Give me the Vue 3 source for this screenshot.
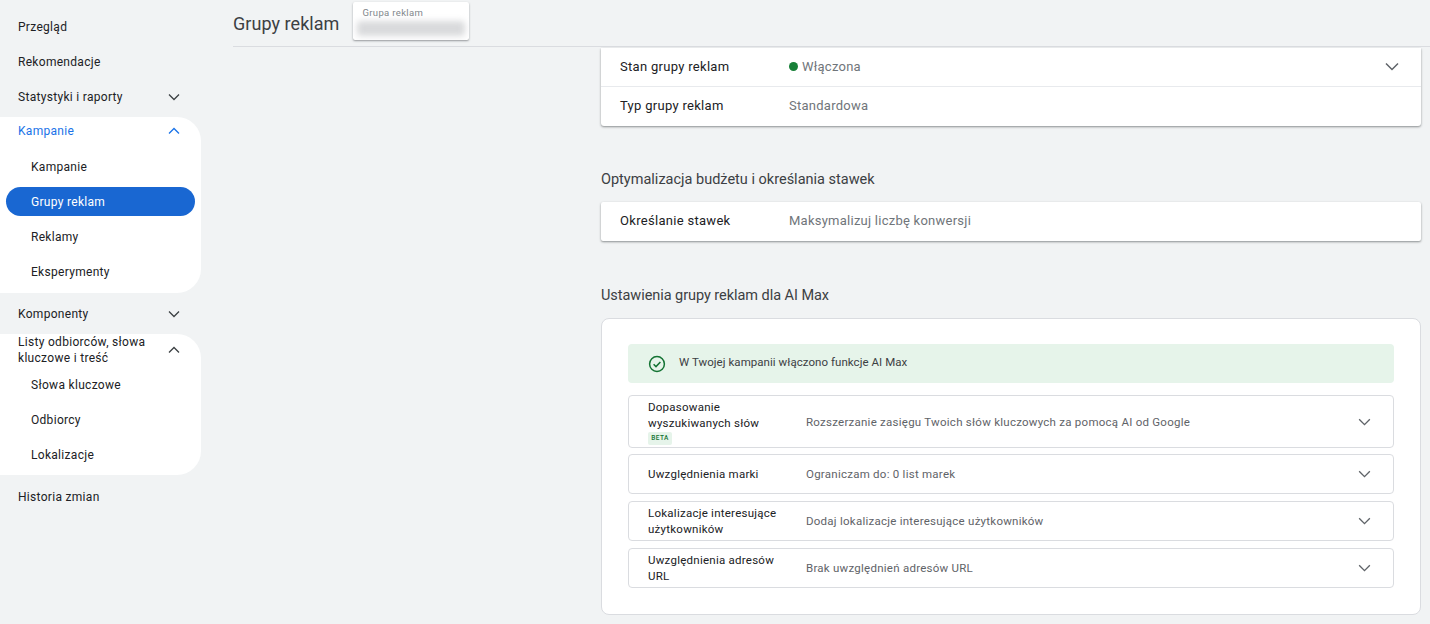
<template>
  <div class="page">
    <nav class="nav">
      <div class="nav__item">Przegląd</div>
      <div class="nav__item">Rekomendacje</div>
      <div class="nav__item">
        Statystyki i raporty
        <svg class="nav__chev" viewBox="0 0 12 8"><path d="M1 1.5l5 5 5-5" /></svg>
      </div>
      <div class="nav__group">
        <div class="nav__item nav__item--open">
          Kampanie
          <svg class="nav__chev" viewBox="0 0 12 8"><path d="M1 6.5l5-5 5 5" /></svg>
        </div>
        <div v-for="item in campaignItems" :key="item" class="nav__sub" :class="{ 'nav__sub--active': item === 'Grupy reklam' }">
          {{ item }}
        </div>
      </div>
      <div class="nav__item nav__item--komponenty">
        Komponenty
        <svg class="nav__chev" viewBox="0 0 12 8"><path d="M1 1.5l5 5 5-5" /></svg>
      </div>
      <div class="nav__group nav__group--second">
        <div class="nav__item nav__item--double">
          <span class="nav__double">Listy odbiorców, słowa kluczowe i treść</span>
          <svg class="nav__chev" viewBox="0 0 12 8"><path d="M1 6.5l5-5 5 5" /></svg>
        </div>
        <div v-for="item in audienceItems" :key="item" class="nav__sub">{{ item }}</div>
      </div>
      <div class="nav__item nav__item--last">Historia zmian</div>
    </nav>

    <div class="main">
      <header class="header">
        <h1 class="header__title">Grupy reklam</h1>
        <div class="picker">
          <div class="picker__label">Grupa reklam</div>
          <div class="picker__blur"></div>
        </div>
      </header>

      <div class="content">
        <section class="card card--first">
          <div class="row row--line">
            <div class="row__name">Stan grupy reklam</div>
            <div class="row__value"><span class="dot"></span>Włączona</div>
            <svg class="row__chev" viewBox="0 0 14 9"><path d="M1 1.5l6 6 6-6" /></svg>
          </div>
          <div class="row">
            <div class="row__name">Typ grupy reklam</div>
            <div class="row__value">Standardowa</div>
          </div>
        </section>

        <h2 class="title title--budget">Optymalizacja budżetu i określania stawek</h2>
        <section class="card">
          <div class="row row--single">
            <div class="row__name">Określanie stawek</div>
            <div class="row__value">Maksymalizuj liczbę konwersji</div>
          </div>
        </section>

        <h2 class="title title--ai">Ustawienia grupy reklam dla AI Max</h2>
        <section class="panel">
          <div class="banner">
            <svg class="banner__icon" viewBox="0 0 18 18">
              <circle cx="9" cy="9" r="7.4" />
              <path d="M5.6 9.2l2.4 2.4 4.4-4.6" />
            </svg>
            <span class="banner__text">W Twojej kampanii włączono funkcje AI Max</span>
          </div>
          <div
            v-for="opt in options"
            :key="opt.name"
            class="option"
            :class="{ 'option--beta': opt.beta }"
          >
            <div class="option__name">
              <div>{{ opt.name }}</div>
              <span v-if="opt.beta" class="beta">BETA</span>
            </div>
            <div class="option__value">{{ opt.value }}</div>
            <svg class="option__chev" viewBox="0 0 14 9"><path d="M1 1.5l6 6 6-6" /></svg>
          </div>
        </section>
      </div>
    </div>
  </div>
</template>

<script setup>
const campaignItems = ['Kampanie', 'Grupy reklam', 'Reklamy', 'Eksperymenty'];
const audienceItems = ['Słowa kluczowe', 'Odbiorcy', 'Lokalizacje'];

const options = [
  {
    name: 'Dopasowanie wyszukiwanych słów',
    value: 'Rozszerzanie zasięgu Twoich słów kluczowych za pomocą AI od Google',
    beta: true,
  },
  { name: 'Uwzględnienia marki', value: 'Ograniczam do: 0 list marek' },
  {
    name: 'Lokalizacje interesujące użytkowników',
    value: 'Dodaj lokalizacje interesujące użytkowników',
  },
  { name: 'Uwzględnienia adresów URL', value: 'Brak uwzględnień adresów URL' },
];
</script>

<style>
html,
body {
  margin: 0;
  background: #f1f3f4;
}
</style>

<style scoped>
.page {
  display: flex;
  width: 1430px;
  height: 624px;
  overflow: hidden;
  background: #f1f3f4;
  font-family: Roboto, "Liberation Sans", sans-serif;
  color: #3c4043;
}

.nav {
  flex: 0 0 201px;
  padding-top: 9px;
  font-size: 12px;
  font-weight: 450;
  letter-spacing: 0.3px;
  color: #202124;
}

.nav__item {
  display: flex;
  align-items: center;
  justify-content: space-between;
  height: 35px;
  padding: 0 21px 0 18px;
}

.nav__item--open {
  height: 28px;
  margin-bottom: 4px;
  color: #1a73e8;
}

.nav__item--open .nav__chev {
  stroke: #1a73e8;
}

.nav__item--komponenty {
  margin-top: 3px;
}

.nav__item--double {
  height: 31px;
  padding-bottom: 2px;
  line-height: 16px;
}

.nav__item--last {
  margin-top: 4px;
}

.nav__double {
  width: 140px;
}

.nav__chev {
  flex: none;
  width: 12px;
  height: 8px;
  fill: none;
  stroke: #3c4043;
  stroke-width: 1.3;
}

.nav__group {
  height: 176px;
  border-radius: 0 24px 24px 0;
  background: #fff;
  margin-top: 3px;
}

.nav__group--second {
  height: 141px;
  margin-top: 3px;
}

.nav__sub {
  display: flex;
  align-items: center;
  height: 35.2px;
  padding-left: 31px;
}

.nav__sub--active {
  height: 29px;
  margin: 3px 6px;
  padding-left: 25px;
  border-radius: 15px;
  background: #1967d2;
  color: #fff;
}

.main {
  flex: 1;
  min-width: 0;
  padding-left: 32px;
}

.header {
  display: flex;
  align-items: flex-start;
  height: 46px;
  border-bottom: 1px solid #dadce0;
}

.header__title {
  margin: 13px 14px 0 0;
  font-size: 18px;
  font-weight: 400;
  letter-spacing: 0.05px;
  line-height: 22px;
  color: #3c4043;
}

.picker {
  width: 116px;
  height: 38px;
  margin-top: 2px;
  border-radius: 2px;
  background: #fff;
  box-shadow: 0 1px 2px rgba(60, 64, 67, 0.5);
  box-sizing: border-box;
  padding: 5px 3px 0;
  overflow: hidden;
}

.picker__label {
  padding-left: 6px;
  font-size: 9.5px;
  line-height: 12px;
  letter-spacing: 0.35px;
  color: #80868b;
}

.picker__blur {
  height: 15px;
  margin: 2px 1px 0;
  border-radius: 3px;
  background: #d9dadc;
  filter: blur(3px);
}

.content {
  padding-left: 368px;
  width: 820px;
}

.card {
  border-radius: 2px;
  background: #fff;
  box-shadow: 0 1px 2px rgba(60, 64, 67, 0.45), 0 1px 3px rgba(60, 64, 67, 0.15);
}

.card--first {
  margin-top: 1px;
  border-radius: 0 0 3px 3px;
}

.row {
  position: relative;
  display: flex;
  align-items: center;
  box-sizing: border-box;
  height: 39px;
  padding: 0 0 2px 19px;
  font-size: 13px;
  font-weight: 450;
  letter-spacing: 0.3px;
}

.row--line {
  border-bottom: 1px solid #e8eaed;
}

.row__name {
  width: 169px;
  color: #202124;
}

.row__value {
  display: flex;
  align-items: center;
  font-weight: 400;
  letter-spacing: 0.25px;
  color: #70757a;
}

.row__chev {
  margin-left: auto;
  margin-right: 22px;
  width: 14px;
  height: 9px;
  fill: none;
  stroke: #5f6368;
  stroke-width: 1.5;
}

.dot {
  width: 9px;
  height: 9px;
  margin-right: 4px;
  border-radius: 50%;
  background: #188038;
}

.title {
  margin: 0;
  font-size: 14.5px;
  font-weight: 400;
  line-height: 20px;
  color: #3c4043;
}

.title--budget {
  margin-top: 44px;
  margin-bottom: 12px;
}

.title--ai {
  margin-top: 45px;
  margin-bottom: 12px;
  letter-spacing: -0.05px;
}

.panel {
  box-sizing: border-box;
  height: 297px;
  padding: 25px 26px 0;
  border: 1px solid #dadce0;
  border-radius: 8px;
  background: #fff;
}

.banner {
  display: flex;
  align-items: center;
  height: 39px;
  margin-bottom: 12px;
  padding-left: 20px;
  border-radius: 4px;
  background: #e6f4ea;
  font-size: 11.5px;
  letter-spacing: 0.05px;
  color: #3c4043;
}

.banner__text {
  margin-top: -3px;
}

.banner__icon {
  width: 18px;
  height: 18px;
  margin-right: 13px;
  fill: none;
  stroke: #137333;
  stroke-width: 1.5;
}

.option {
  display: flex;
  align-items: center;
  box-sizing: border-box;
  height: 40px;
  margin-bottom: 7px;
  padding: 0 22px 0 19px;
  border: 1px solid #dadce0;
  border-radius: 4px;
  font-size: 11.5px;
  letter-spacing: 0.25px;
}

.option--beta {
  height: 53px;
  margin-bottom: 6px;
}

.option__name {
  flex: 0 0 158px;
  padding-right: 20px;
  box-sizing: border-box;
  font-weight: 450;
  line-height: 16.5px;
  color: #202124;
}

.option__value {
  color: #5f6368;
}

.option__chev {
  margin-left: auto;
  width: 13px;
  height: 8px;
  fill: none;
  stroke: #5f6368;
  stroke-width: 1.5;
}

.beta {
  display: block;
  width: 24px;
  height: 13px;
  border-radius: 2px;
  background: #e6f4ea;
  color: #137333;
  font-size: 6.5px;
  font-weight: 500;
  line-height: 13px;
  letter-spacing: 0.4px;
  text-align: center;
}
</style>
